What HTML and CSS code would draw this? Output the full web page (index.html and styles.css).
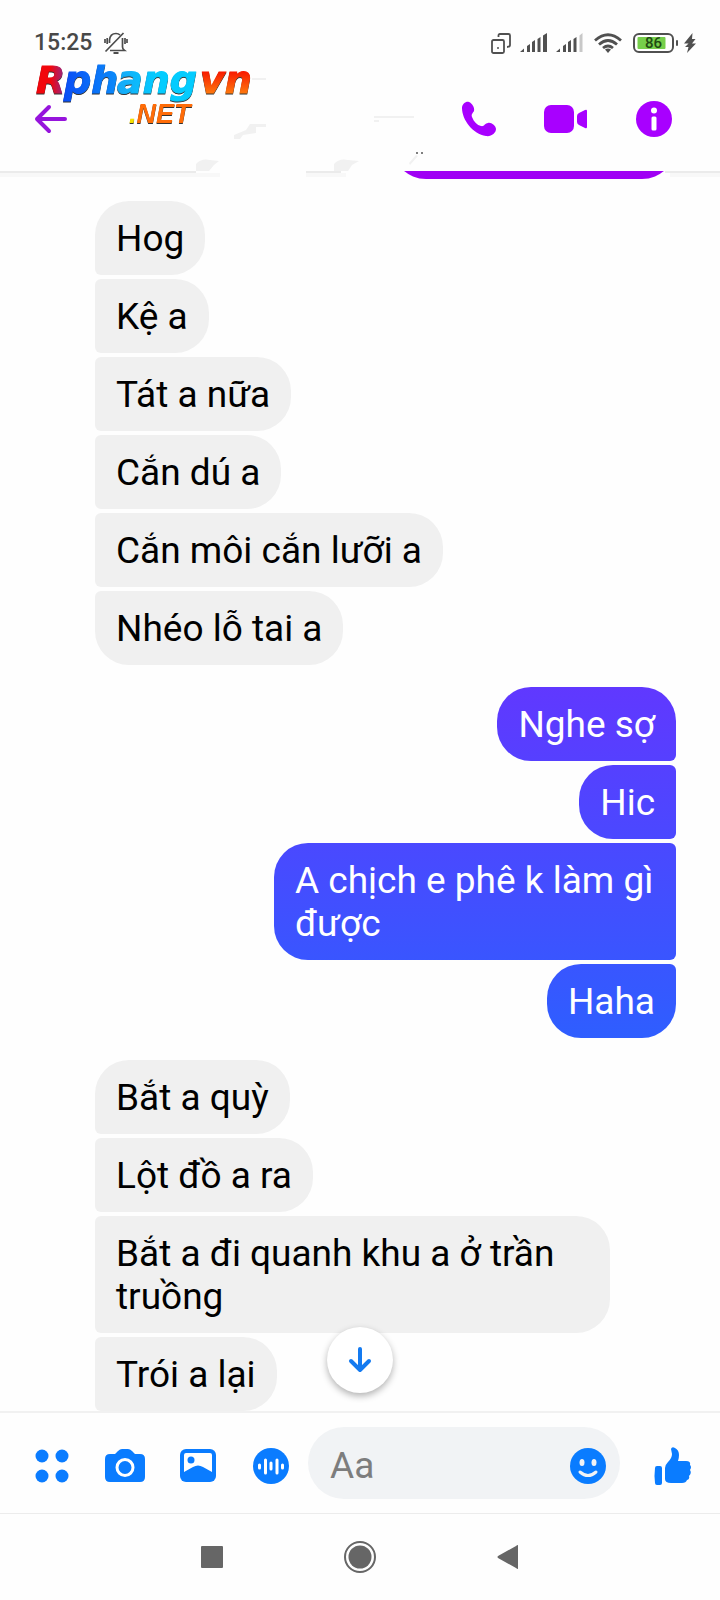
FILE: index.html
```html
<!DOCTYPE html>
<html lang="vi">
<head>
<meta charset="utf-8">
<meta name="viewport" content="width=device-width, initial-scale=1">
<title>Rphangvn.NET</title>
<link rel="stylesheet" href="styles.css">
</head>
<body>
<div class="app">
  <header class="header">
    <div class="status">
      <time class="clock">15:25</time>
      <svg class="mute" width="24" height="22" viewBox="0 0 24 22" fill="none" stroke="#4c4c4c" stroke-width="1.700">
        <path d="M5.500 11V8C6 3 9 1.500 12 1.500q2.500 0 4 1.500M18.500 6v9q0 2 2 3.500H6M1 7v4M3.200 6v6M23 7v4M21 6v6M1.500 19.500L19.500 1"/>
        <path d="M9.500 21h5" stroke-width="2"/>
      </svg>
      <div class="status-icons">
        <svg width="20" height="21" viewBox="0 0 20 21" fill="none" stroke="#505050" stroke-width="1.800">
          <rect x="1" y="7" width="12" height="13" rx="1.500"/><path d="M7.500 4V2.500Q7.500 1 9 1h8.500Q19 1 19 2.500V12q0 2-3 2"/>
          <circle cx="7" cy="15" r="1" fill="#505050" stroke="none"/>
        </svg>
        <svg width="27" height="20" viewBox="0 0 27 20" fill="#505050">
          <path d="M0 19l4-3.500V19zM7 13l3-2v8H7zM12 9l3-2v12h-3zM17.500 6l3-2v15h-3zM23 2.500l4-2.500v19h-4z"/>
        </svg>
        <svg width="27" height="20" viewBox="0 0 27 20" fill="#505050">
          <path d="M0 19l4-3.500V19zM7 13l3-2v8H7zM12 9l3-2v12h-3zM17.500 6l3-2v15h-3z"/><path fill="#c8c8c8" d="M23.500 2.500l3-2.500v19h-3z"/>
        </svg>
        <svg class="wifi" width="28" height="20" viewBox="0 0 28 20" fill="none" stroke="#505050" stroke-width="2.800">
          <path d="M1 7.500Q14-4 27 7.500M5 11.500q9-8 18 0M9 15q5-4 10 0"/><path d="M11 16.500q3-2 6 0L14 20z" fill="#505050" stroke="none"/>
        </svg>
        <span class="battery">
          <svg width="46" height="20" viewBox="0 0 46 20">
            <rect x="1" y="1" width="39" height="18" rx="5" fill="#fff" stroke="#505050" stroke-width="2"/>
            <rect x="4.500" y="4" width="28" height="12" rx="1" fill="#76cf4b"/><rect x="43" y="7" width="2" height="6" rx="1" fill="#505050"/>
          </svg>
          <span class="battery-level">86</span>
        </span>
        <svg class="bolt" width="12" height="20" viewBox="0 0 12 20" fill="#505050"><path d="M8.500 0L0 10.500h4.500L1 14h3.500L3 20l9-9.500H8L11.500 6H8z"/></svg>
      </div>
    </div>
    <div class="toolbar">
      <button class="icon-button back" aria-label="Quay lại">
        <svg width="34" height="30" viewBox="0 0 34 30" fill="none" stroke="#9614dc" stroke-width="4" stroke-linecap="round" stroke-linejoin="round"><path d="M15 3L3 15l12 12M3 15h28"/></svg>
      </button>
      <div class="actions">
        <button class="icon-button" aria-label="Gọi thoại">
          <svg width="35" height="36" viewBox="0 0 35 36" fill="#a800ff"><path d="M1 7C1 3 5 0 8 1c3 1 6 6 5 9-1 2-3 3-2 6 2 5 5 8 9 9 3 1 4-3 7-3 3-1 8 3 8 6 0 4-5 8-10 7C12 33 1 19 1 7z"/></svg>
        </button>
        <button class="icon-button" aria-label="Gọi video">
          <svg width="44" height="28" viewBox="0 0 44 28" fill="#a800ff"><rect width="30" height="28" rx="7"/><path d="M33 11q0-2 2-3l6-3q2-1 2 1v16q0 2-2 1l-6-3q-2-1-2-3z"/></svg>
        </button>
        <button class="icon-button" aria-label="Thông tin">
          <svg width="36" height="36" viewBox="0 0 36 36"><circle cx="18" cy="18" r="18" fill="#a800ff"/><circle cx="18" cy="9.500" r="3" fill="#fff"/><rect x="15.500" y="15.500" width="5" height="14" rx="1.500" fill="#fff"/></svg>
        </button>
      </div>
    </div>
    <svg class="brand" width="240" height="72" viewBox="0 0 240 72" role="img" aria-label="Rphangvn.NET">
      <defs>
        <linearGradient id="red"><stop offset=".5" stop-color="#f2060c"/><stop offset="1" stop-color="#8c2a90"/></linearGradient>
        <linearGradient id="blue"><stop offset="0" stop-color="#0a4cf5"/><stop offset="1" stop-color="#0a8cfa"/></linearGradient>
        <linearGradient id="cyan"><stop offset="0" stop-color="#16a8f8"/><stop offset=".5" stop-color="#04ccff"/></linearGradient>
        <linearGradient id="fire" x2="0" y2="1"><stop offset=".3" stop-color="#f81800"/><stop offset=".9" stop-color="#ff8a10"/></linearGradient>
      </defs>
      <g class="brand-name">
        <text x="6" y="37" fill="url(#red)" stroke="url(#red)">R</text><text x="34" y="37" fill="url(#blue)" stroke="url(#blue)">ph</text><text x="87" y="37" fill="url(#cyan)" stroke="url(#cyan)">ang</text><text x="170" y="37" fill="url(#fire)" stroke="url(#fire)">vn</text>
      </g>
      <text class="brand-suffix" x="99" y="67"><tspan fill="#f5e000">.</tspan><tspan fill="#ff6c08">NET</tspan></text>
    </svg>
    <svg class="edge" width="720" height="110" viewBox="0 0 720 110">
      <g fill="#f1f1f1">
        <path d="M252 5h14v2h-14zM234 62l12-5 4-6h16v3h-10v6l-13 2-3 4h-6zM374 43h40v2h-40zM374 47h5v2h-5zM409 90l7-8 2 1-8 9z"/>
        <path d="M196 91q5-6 14-4l9 1-5 4-5 6h-13zM334 91q5-6 14-4l11 1-7 4-4 6h-14z"/>
        <path fill="#ebebeb" d="M0 98h196v2H0zM306 98h35v2h-35zM665 98h55v2h-55z"/>
      </g>
      <path fill="#f8f8f8" d="M0 100h220v4H0zM306 100h40v4h-40zM670 100h50v4h-50z"/>
      <circle cx="417" cy="80" r="1" fill="#555"/><circle cx="422" cy="80" r="1" fill="#555"/>
    </svg>
  </header>

  <main class="thread">
    <div class="group sent"><p class="bubble earlier"></p></div>
    <div class="group received">
      <p class="bubble">Hog</p>
      <p class="bubble">Kệ a</p>
      <p class="bubble">Tát a nữa</p>
      <p class="bubble">Cắn dú a</p>
      <p class="bubble">Cắn môi cắn lưỡi a</p>
      <p class="bubble">Nhéo lỗ tai a</p>
    </div>
    <div class="group sent">
      <p class="bubble">Nghe sợ</p>
      <p class="bubble">Hic</p>
      <p class="bubble">A chịch e phê k làm gì được</p>
      <p class="bubble">Haha</p>
    </div>
    <div class="group received continues">
      <p class="bubble">Bắt a quỳ</p>
      <p class="bubble">Lột đồ a ra</p>
      <p class="bubble">Bắt a đi quanh khu a ở trần truồng</p>
      <p class="bubble">Trói a lại</p>
    </div>
    <button class="scroll-down" aria-label="Xuống cuối">
      <svg width="24" height="28" viewBox="0 0 24 28" fill="none" stroke="#147af0" stroke-width="4" stroke-linecap="round" stroke-linejoin="round"><path d="M12 3v21M3 15l9 9 9-9"/></svg>
    </button>
  </main>

  <form class="composer">
    <div class="tools">
      <button type="button" class="icon-button tool" aria-label="Thêm">
        <svg width="34" height="34" viewBox="0 0 34 34" fill="#0a7cff"><circle cx="7" cy="7" r="6.500"/><circle cx="27" cy="7" r="6.500"/><circle cx="7" cy="27" r="6.500"/><circle cx="27" cy="27" r="6.500"/></svg>
      </button>
      <button type="button" class="icon-button tool" aria-label="Máy ảnh">
        <svg width="40" height="34" viewBox="0 0 40 34"><path fill="#0a7cff" d="M5 5h5l3-3q2-2 4-2h6q2 0 4 2l3 3h5q5 0 5 5v18q0 5-5 5H5q-5 0-5-5V10q0-5 5-5z"/><circle cx="20" cy="18.500" r="8" fill="#0a7cff" stroke="#fff" stroke-width="3"/></svg>
      </button>
      <button type="button" class="icon-button tool" aria-label="Ảnh">
        <svg width="36" height="34" viewBox="0 0 36 34"><rect width="36" height="33" rx="6" fill="#0a7cff"/><path fill="#fff" d="M4 6q0-2 2-2h24q2 0 2 2v17l-9-5q-5-3-10 0l-9 5z"/><circle cx="11" cy="11" r="3.500" fill="#0a7cff"/></svg>
      </button>
      <button type="button" class="icon-button tool" aria-label="Ghi âm">
        <svg width="36" height="36" viewBox="0 0 36 36"><circle cx="18" cy="18" r="18" fill="#0a7cff"/><path stroke="#fff" stroke-width="3" stroke-linecap="round" d="M6.500 17v3M12.500 12v13M18 15v6M24 12v13M29.500 17v3"/></svg>
      </button>
    </div>
    <div class="field">
      <input class="message" type="text" placeholder="Aa" aria-label="Tin nhắn">
      <button type="button" class="icon-button" aria-label="Biểu tượng cảm xúc">
        <svg width="36" height="36" viewBox="0 0 36 36"><circle cx="18" cy="18" r="18" fill="#0a7cff"/><ellipse cx="12" cy="14.500" rx="2.500" ry="3.500" fill="#f1f3f5"/><ellipse cx="24" cy="14.500" rx="2.500" ry="3.500" fill="#f1f3f5"/><path d="M10 24q8 7 16 0" fill="none" stroke="#f1f3f5" stroke-width="3" stroke-linecap="round"/></svg>
      </button>
    </div>
    <button type="button" class="icon-button tool" aria-label="Thích">
      <svg width="38" height="40" viewBox="0 0 38 40" fill="#0a7cff"><path d="M3 20h3q2 0 2 2v15q0 2-2 2H3q-2 0-2-2-1-7 0-15 0-2 2-2zM17 3q1-3 4-1 4 2 4 7 0 3-1 6h8q5 0 4 4 2 2 0 5 2 3-1 6 1 3-2 4-1 3-5 3H17q-6 0-6-4V22q0-3 3-6 4-4 4-8z"/></svg>
    </button>
  </form>

  <nav class="system-nav">
    <button class="icon-button nav-key" aria-label="Gần đây"><svg width="22" height="22" viewBox="0 0 22 22"><rect width="22" height="22" rx="1" fill="#666"/></svg></button>
    <button class="icon-button nav-key" aria-label="Trang chính"><svg width="34" height="34" viewBox="0 0 34 34"><circle cx="17" cy="17" r="15" fill="none" stroke="#666" stroke-width="2"/><circle cx="17" cy="17" r="11.500" fill="#666"/></svg></button>
    <button class="icon-button nav-key" aria-label="Trở về"><svg width="22" height="26" viewBox="0 0 22 26"><path fill="#666" d="M21 1v24q-1 0-2-1L1 14q-1-1 0-2L19 2q1-1 2-1z"/></svg></button>
  </nav>
</div>
</body>
</html>
```

FILE: styles.css
```css
* {
  box-sizing: border-box;
}

body {
  margin: 0;
  background: #fefefe;
  color: #000;
  font-family: Roboto, "Noto Sans", sans-serif;
}

svg {
  display: block;
  flex: none;
}

.app {
  display: flex;
  flex-direction: column;
  min-height: 100vh;
}

.icon-button {
  display: flex;
  align-items: center;
  justify-content: center;
  flex: none;
  padding: 0;
  border: 0;
  background: none;
}

.header {
  position: relative;
  z-index: 1;
  padding-bottom: 19px;
  background: #fefefe;
}

.status {
  display: flex;
  align-items: center;
  height: 86px;
  padding: 0 24px 0 34px;
}

.clock {
  color: #484848;
  font-size: 23px;
  font-weight: 500;
  line-height: 28px;
}

.mute {
  margin-left: 12px;
}

.status-icons {
  display: flex;
  align-items: center;
  gap: 9px;
  margin-left: auto;
}

.wifi {
  margin: 0 2px;
}

.battery {
  position: relative;
}

.battery-level {
  position: absolute;
  inset: 0 5px 0 0;
  color: #1f4a12;
  font-size: 15px;
  font-weight: 500;
  line-height: 20px;
  text-align: center;
}

.bolt {
  margin-left: -4px;
}

.toolbar {
  display: flex;
  align-items: center;
  justify-content: space-between;
  height: 66px;
  padding: 0 48px 0 34px;
}

.actions {
  display: flex;
  align-items: center;
  gap: 48px;
}

/* Site mark laid over the top bar */
.brand {
  position: absolute;
  top: 56px;
  left: 30px;
  filter: drop-shadow(0 1px 0 #333);
}

.brand-name {
  font: italic 700 38px "DejaVu Sans", sans-serif;
  stroke-width: 1px;
}

.brand-suffix {
  font: italic 700 27px "Liberation Sans", sans-serif;
}

.edge {
  position: absolute;
  top: 73px;
  left: 0;
  pointer-events: none;
}

.thread {
  position: relative;
  display: flex;
  flex: 1;
  flex-direction: column;
  gap: 22px;
  padding: 0 44px 0 95px;
  overflow: hidden;
}

.group {
  display: flex;
  flex-direction: column;
  gap: 4px;
}

.received {
  align-items: flex-start;
}

.sent {
  align-items: flex-end;
}

.bubble {
  max-width: 515px;
  margin: 0;
  padding: 16px 21px 15px;
  font-size: 37px;
  line-height: 43px;
}

.received .bubble {
  border-radius: 6px 34px 34px 6px;
  background: #f0f0f0;
}

.sent .bubble {
  max-width: 402px;
  border-radius: 34px 6px 6px 34px;
  background: linear-gradient(#a800ff 0%, #a000f4 11%, #6038ff 43%, #2e5eff 65%) fixed;
  color: #fff;
}

.received .bubble:first-child {
  border-top-left-radius: 34px;
}

.received:not(.continues) .bubble:last-of-type {
  border-bottom-left-radius: 34px;
}

.sent .bubble:first-child {
  border-top-right-radius: 34px;
}

.sent .bubble:last-child {
  border-bottom-right-radius: 34px;
}

/* Message scrolled almost out of view under the header */
.sent .earlier {
  width: 284px;
  height: 74px;
  margin-top: -66px;
}

.scroll-down {
  position: absolute;
  bottom: 18px;
  left: 50%;
  display: flex;
  align-items: center;
  justify-content: center;
  width: 66px;
  height: 66px;
  margin-left: -33px;
  padding: 0;
  border: 0;
  border-radius: 50%;
  background: #fff;
  box-shadow: 0 3px 7px rgba(0, 0, 0, 0.3);
}

.composer {
  display: flex;
  align-items: center;
  padding: 14px 27px 14px 32px;
  border-top: 2px solid #f1f1f1;
  border-bottom: 1px solid #ececec;
}

.composer .icon-button {
  margin-top: 6px;
}

.tools {
  display: flex;
  gap: 33px;
}

.tool {
  width: 40px;
  height: 40px;
}

.field {
  display: flex;
  align-items: center;
  flex: 1;
  min-width: 0;
  height: 72px;
  margin: 0 33px 0 17px;
  padding: 0 14px 0 22px;
  border-radius: 36px;
  background: #f1f3f5;
}

.message {
  flex: 1;
  min-width: 0;
  padding: 4px 0 0;
  border: 0;
  outline: 0;
  background: none;
  color: #000;
  font: 37px Roboto, "Noto Sans", sans-serif;
}

.message::placeholder {
  color: #7d7d7d;
  opacity: 1;
}

.system-nav {
  display: flex;
  align-items: center;
  justify-content: center;
  gap: 114px;
  height: 86px;
}

.nav-key {
  width: 34px;
  height: 34px;
}
```
